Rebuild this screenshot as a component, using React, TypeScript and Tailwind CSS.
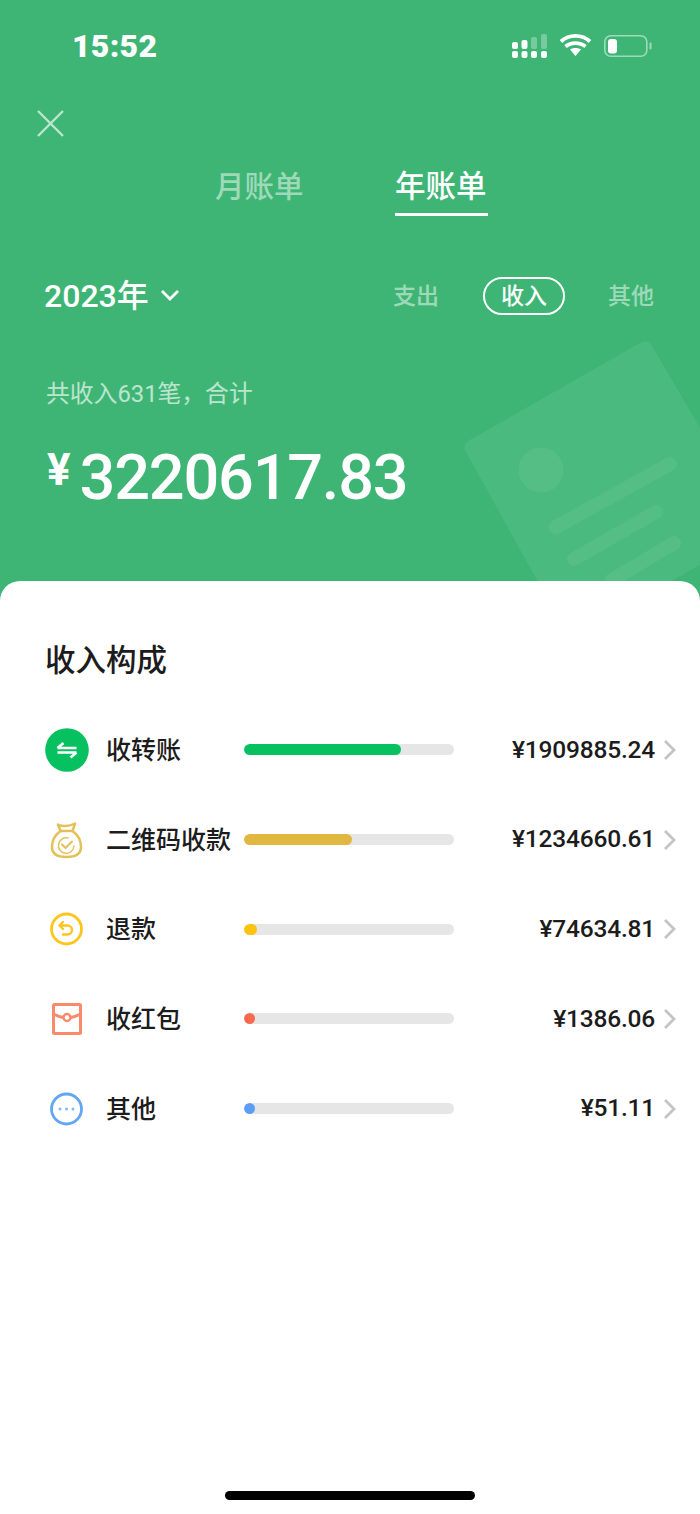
import React from "react";

const Chevron = () => (
  <svg width="16" height="22" viewBox="0 0 16 22" fill="none" className="shrink-0">
    <path d="M3 2l9 9-9 9" stroke="#c4c4c4" strokeWidth="2.800" />
  </svg>
);

const TransferIcon = () => (
  <svg width="44" height="44" viewBox="0 0 44 44" fill="none">
    <circle cx="22" cy="22" r="21.800" fill="#07c160" />
    <path d="M12.500 20h19M12.500 20l6-5M31.500 24.500h-19M31.500 24.500l-6 5" stroke="#fff" strokeWidth="2.600" />
  </svg>
);

const BagIcon = () => (
  <svg width="44" height="44" viewBox="0 0 44 44" fill="none" stroke="#e4c158" strokeWidth="2.500" strokeLinejoin="round" strokeLinecap="round">
    <path d="M13 6.500c4 2.500 11 2 17-1l-2.500 7.500h-12z" />
    <path d="M15.500 13C10 17 7 22.500 7 29c0 7 6 10 14.500 10S36 36 36 29c0-6.500-3-12-8.500-16" />
    <path d="M17 26.500l3.500 3.500 6.500-6.500" strokeWidth="2" />
    <path d="M29 28a7.800 7.800 0 11-6-8" strokeWidth="1.500" />
  </svg>
);

const RefundIcon = () => (
  <svg width="44" height="44" viewBox="0 0 44 44" fill="none" stroke="#fdc51d" strokeWidth="2.800" strokeLinecap="round" strokeLinejoin="round">
    <circle cx="21.500" cy="22" r="15" />
    <path d="M18 15l-3.500 3.500 3.500 3.500M14.500 18.500h8a4.500 4.500 0 010 9H18" strokeWidth="2.400" />
  </svg>
);

const RedPacketIcon = () => (
  <svg width="44" height="44" viewBox="0 0 44 44" fill="none" stroke="#f98a6c" strokeWidth="3" strokeLinejoin="round">
    <rect x="8.500" y="7.500" width="27" height="29" rx="1" />
    <path d="M8.500 17c4 2 7 3 10 3.500M35.500 17c-4 2-7 3-10 3.500" />
    <circle cx="22" cy="20.500" r="3.500" strokeWidth="2.400" />
  </svg>
);

const OtherIcon = () => (
  <svg width="44" height="44" viewBox="0 0 44 44" fill="none">
    <circle cx="21.500" cy="22" r="15" stroke="#62a6f6" strokeWidth="2.800" />
    <circle cx="15" cy="22" r="1.500" fill="#62a6f6" fillOpacity="0.8" />
    <circle cx="21.500" cy="22" r="1.500" fill="#62a6f6" fillOpacity="0.8" />
    <circle cx="28" cy="22" r="1.500" fill="#62a6f6" fillOpacity="0.8" />
  </svg>
);

const rows = [
  { icon: <TransferIcon />, name: "收转账", amount: "¥1909885.24", width: "w-[157px]", color: "bg-[#07c160]" },
  { icon: <BagIcon />, name: "二维码收款", amount: "¥1234660.61", width: "w-[108px]", color: "bg-[#e2b740]" },
  { icon: <RefundIcon />, name: "退款", amount: "¥74634.81", width: "w-[13px]", color: "bg-[#fcc30f]" },
  { icon: <RedPacketIcon />, name: "收红包", amount: "¥1386.06", width: "w-[11px]", color: "bg-[#f8694f]" },
  { icon: <OtherIcon />, name: "其他", amount: "¥51.11", width: "w-[11px]", color: "bg-[#5a9ef8]" },
];

export default function App() {
  return (
    <div className="relative flex h-[1514px] w-[700px] flex-col overflow-hidden bg-[#3eb575] font-['Roboto','Noto_Sans_CJK_SC',sans-serif] text-white">
      <svg width="700" height="581" viewBox="0 0 700 581" className="absolute left-0 top-0" fill="none">
        <path d="M465 450 Q463 444 470 440 L640 343 Q648 339 652 346 L760 530 L570 640 Z" fill="#fff" fillOpacity="0.07" />
        <circle cx="541" cy="470" r="22.500" fill="#fff" fillOpacity="0.06" />
        <path d="M556 527L670 464M574 559L656 512M612 580L674 543" stroke="#fff" strokeOpacity="0.06" strokeWidth="14" strokeLinecap="round" />
      </svg>

      <header className="relative h-[581px] shrink-0">
        <div className="flex h-[92px] items-center justify-between pl-[72px] pr-[46px]">
          <span className="text-[32px] font-black leading-none tracking-[0.3px]">15:52</span>
          <svg width="142" height="26" viewBox="0 0 142 26" fill="none">
            <g fill="#fff">
              <rect x="0" y="9" width="6" height="7" rx="2" />
              <rect x="9.500" y="7" width="6" height="9" rx="2" />
              <rect x="0" y="18" width="6" height="7" rx="2" />
              <rect x="9.500" y="18" width="6" height="7" rx="2" />
              <rect x="19" y="18" width="6" height="7" rx="2" />
              <rect x="29" y="18" width="6" height="7" rx="2" />
              <rect x="19" y="4" width="6" height="12" rx="2" fillOpacity="0.3" />
              <rect x="29" y="1" width="6" height="15" rx="2" fillOpacity="0.3" />
            </g>
            <path d="M49 8.500C57 1 70 1 78 8.500M53.500 13.500C59 9 68 9 73.500 13.500" stroke="#fff" strokeWidth="3.800" />
            <path d="M58 16.500c3-2 8-2 11 0L63.500 23z" fill="#fff" />
            <rect x="92.800" y="2.800" width="42" height="20.500" rx="6" stroke="#fff" strokeOpacity="0.5" strokeWidth="1.600" />
            <rect x="96" y="6" width="9" height="14.500" rx="3" fill="#fff" />
            <rect x="137.500" y="9.500" width="2" height="7" rx="1" fill="#fff" fillOpacity="0.5" />
          </svg>
        </div>

        <div className="ml-[37px] mt-[18px] h-[27px] w-[27px]">
          <svg width="27" height="27" viewBox="0 0 27 27" fill="none">
            <path d="M1 1l25 25M26 1L1 26" stroke="#fff" strokeOpacity="0.65" strokeWidth="2.400" />
          </svg>
        </div>

        <div className="mt-[26px] flex pl-[215px] font-['Noto_Sans_CJK_SC',sans-serif]">
          <div className="w-[88px] whitespace-nowrap text-[29.500px] font-medium leading-[42px] text-white/50">月账单</div>
          <div className="ml-[92px] flex w-[93px] flex-col">
            <div className="whitespace-nowrap text-[30.500px] font-medium leading-[42px]">年账单</div>
            <div className="mt-[8px] h-[3px] bg-white" />
          </div>
        </div>

        <div className="mt-[61px] flex h-[38px] items-center pl-[44px] pr-[46px]">
          <span className="pb-[4px] text-[32px] font-medium leading-none">2023<span className="font-['Noto_Sans_CJK_SC',sans-serif]">年</span></span>
          <svg width="20" height="14" viewBox="0 0 20 14" fill="none" className="ml-[11px] mb-[2px]">
            <path d="M2 3l8 8 8-8" stroke="#fff" strokeWidth="2.800" />
          </svg>
          <div className="ml-auto flex items-center font-['Noto_Sans_CJK_SC',sans-serif] text-[23px] font-medium">
            <span className="pb-[3px] text-white/50">支出</span>
            <span className="ml-[44px] flex h-[38px] w-[82px] items-center justify-center rounded-full border-2 border-white pb-[3px]">收入</span>
            <span className="ml-[43px] pb-[3px] text-white/50">其他</span>
          </div>
        </div>

        <div className="ml-[46px] mt-[63px] text-[23.800px] leading-[32px] text-white/65">共收入631笔，合计</div>

        <div className="mt-[27px] flex h-[80px] items-center pl-[47px]">
          <span className="mb-[14px] text-[44px] font-bold leading-none">¥</span>
          <span className="ml-[9px] text-[63px] font-medium leading-none tracking-[-1.200px]">3220617.83</span>
        </div>
      </header>

      <main className="relative flex flex-1 flex-col rounded-t-[20px] bg-white pt-[56px] text-[#1c1c1c]">
        <h1 className="ml-[45px] font-['Noto_Sans_CJK_SC',sans-serif] text-[30.500px] font-medium leading-[42px]">收入构成</h1>
        <ul className="mt-[26px]">
          {rows.map((r) => (
            <li key={r.name} className="flex h-[89.700px] items-center pl-[45px] pr-[22px]">
              <div className="flex w-[44px] shrink-0 items-center justify-center">{r.icon}</div>
              <div className="ml-[17px] mb-[2px] w-[138px] shrink-0 whitespace-nowrap font-['Noto_Sans_CJK_SC',sans-serif] text-[25px] font-medium">{r.name}</div>
              <div className="h-[11px] w-[210px] shrink-0 overflow-hidden rounded-full bg-[#e6e6e6]">
                <div className={`h-full rounded-full ${r.width} ${r.color}`} />
              </div>
              <div className="ml-auto text-[24.500px] font-medium leading-none tracking-[-0.200px]">{r.amount}</div>
              <div className="ml-[7px]"><Chevron /></div>
            </li>
          ))}
        </ul>
        <div className="mb-[14px] mt-auto h-[9px] w-[250px] self-center rounded-full bg-black" />
      </main>
    </div>
  );
}
